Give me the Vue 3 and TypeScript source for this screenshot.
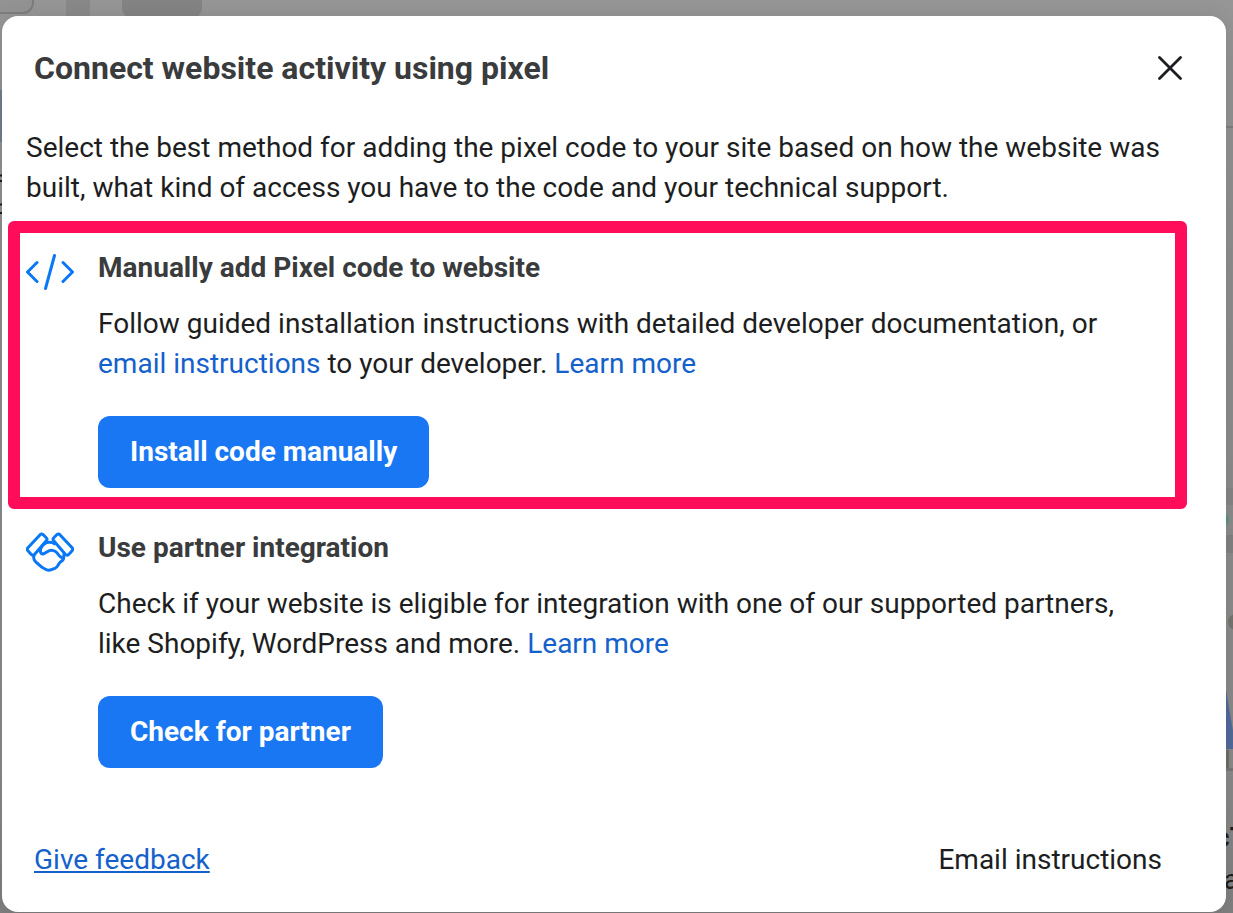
<script setup lang="ts">
interface MethodOption {
  id: string
  title: string
  icon: 'code' | 'handshake'
  action: string
  highlighted: boolean
}

const options: MethodOption[] = [
  { id: 'manual', title: 'Manually add Pixel code to website', icon: 'code', action: 'Install code manually', highlighted: true },
  { id: 'partner', title: 'Use partner integration', icon: 'handshake', action: 'Check for partner', highlighted: false },
]
</script>

<template>
  <div class="page">
    <div class="backdrop" aria-hidden="true">
      <svg class="backdrop-top" width="300" height="220" viewBox="0 0 300 220">
        <rect x="0" y="90" width="4" height="52" fill="#747d8c" />
        <rect x="-20" y="-20" width="53" height="33" rx="10" fill="#939393" stroke="#7d7d7d" stroke-width="2" />
        <rect x="66" y="0" width="24" height="20" fill="#898989" />
        <rect x="122" y="-20" width="80" height="38" rx="10" fill="#848484" />
        <path d="M0 175.500h2M0 181h2M0 204.500h2M0 213h2" stroke="#1c1c1c" stroke-width="2" />
      </svg>
      <svg class="backdrop-side" width="20" height="800" viewBox="0 0 20 800">
        <path d="M0 127h20" stroke="#7f7f7f" stroke-width="2" />
        <rect x="0" y="488" width="20" height="17" fill="#858585" />
        <rect x="0" y="535" width="20" height="18" fill="#828282" />
        <circle cx="8" cy="520" r="8" fill="#5c9484" />
        <circle cx="23" cy="622" r="8" fill="#77756f" />
        <path d="M13 690L20 731V749H13z" fill="#526a9c" />
        <path d="M13 750h3v18h-3z" fill="#716d69" />
        <path d="M13 769.500h7" stroke="#7a7671" stroke-width="3" />
      </svg>
      <span class="clipped clipped-heading">cT</span>
      <span class="clipped clipped-text">a</span>
    </div>

    <main class="dialog" role="dialog" aria-modal="true" aria-labelledby="dialog-title">
      <header class="header">
        <h1 id="dialog-title">Connect website activity using pixel</h1>
        <button class="close" type="button" aria-label="Close">
          <svg width="24" height="24" viewBox="0 0 24 24">
            <path d="M1.500 1.500l21 21M22.500 1.500l-21 21" fill="none" stroke="#1c1e21" stroke-width="2.800" stroke-linecap="round" />
          </svg>
        </button>
      </header>

      <div class="body">
        <p class="intro">
          Select the best method for adding the pixel code to your site based on how the website was
          built, what kind of access you have to the code and your technical support.
        </p>

        <section v-for="option in options" :key="option.id" class="option" :class="{ highlighted: option.highlighted }">
          <svg v-if="option.icon === 'code'" class="icon" width="48" height="48" viewBox="0 0 48 48" aria-hidden="true">
            <path d="M11 14.500L1.500 24L11 33.500M37 14.500L46.500 24L37 33.500M28.500 7.500L19.500 40.500" />
          </svg>
          <svg v-else class="icon" width="48" height="48" viewBox="0 0 48 48" aria-hidden="true">
            <path d="M1.900 19.800L13.900 6.900q1.700-1.700 3.400-.1l2.900 2.900q1.500 1.500.1 3L8.700 26.300q-1.700 1.700-3.400.1l-3.400-3.700q-1.200-1.500 0-2.900z" />
            <path d="M46.100 19.800L34.100 6.900q-1.700-1.700-3.400-.1l-2.900 2.900q-1.500 1.500-.1 3l11.600 13.600q1.700 1.700 3.400.1l3.400-3.700q1.200-1.500 0-2.900z" />
            <path d="M8 27.500c-.9 2.800-.1 4.800 2.100 6.700 2.600 2 4.400 4.300 7.100 5.800 2 .9 3 2.200 5.200 2.200 2.600 0 3.900-1.200 6.200-1.700 3-.8 3.100-3.100 4.600-5.200 1-1.700 3.600-2.100 4.200-4.300.3-1.600.8-3 .5-4.700" />
            <path d="M18.200 16c2.800-2.300 7.800-2.300 10.400-.1M18.200 16c-2.500 2-4.800 6.200-3.500 8.700 1.500 2.500 4.300.5 6.200-.8 4-2.700 8-1.700 10.200 1 1.400 1.900 2.300 3.900 4.900 4.800" />
          </svg>
          <div class="content">
            <h2>{{ option.title }}</h2>
            <p v-if="option.id === 'manual'">
              Follow guided installation instructions with detailed developer documentation, or
              <a href="#email">email instructions</a> to your developer. <a href="#manual-help">Learn more</a>
            </p>
            <p v-else>
              Check if your website is eligible for integration with one of our supported partners,
              like Shopify, WordPress and more. <a href="#partner-help">Learn more</a>
            </p>
            <button class="primary" type="button">{{ option.action }}</button>
          </div>
        </section>
      </div>

      <footer class="footer">
        <a class="feedback" href="#feedback">Give feedback</a>
        <button class="email" type="button">Email instructions</button>
      </footer>
    </main>
  </div>
</template>

<style>
body {
  margin: 0;
  background: #808080;
}
</style>

<style scoped>
.page {
  position: relative;
  overflow: hidden;
  padding: 16px 7px 1px 2px;
  font-family: Roboto, "Liberation Sans", sans-serif;
  font-size: 28px;
  line-height: 40px;
  color: #1c1e21;
}
.backdrop {
  position: absolute;
  inset: 0;
  background: linear-gradient(#969696, #8e8e8e 30%, #8a8a8a 85%, #808080);
}
.backdrop svg {
  position: absolute;
  top: 0;
}
.backdrop-top {
  left: 0;
}
.backdrop-side {
  right: 0;
}
.clipped {
  position: absolute;
  color: #1c1c1c;
}
.clipped-heading {
  top: 818px;
  right: -14px;
  font-weight: 700;
}
.clipped-text {
  top: 860px;
  right: -6px;
}
.dialog {
  position: relative;
  background: #fff;
  border-radius: 16px;
  box-shadow: 0 4px 24px rgba(0, 0, 0, 0.12);
}
.header {
  display: flex;
  align-items: center;
  justify-content: space-between;
  height: 104px;
  padding: 0 32px;
}
h1,
h2,
p {
  margin: 0;
}
h1 {
  font-size: 32px;
  line-height: 40px;
  font-weight: 700;
  color: #3a3b3d;
}
button {
  font: inherit;
  border: 0;
  cursor: pointer;
}
.close {
  display: flex;
  align-items: center;
  justify-content: center;
  width: 48px;
  height: 48px;
  padding: 0;
  background: transparent;
}
.body {
  display: flex;
  flex-direction: column;
  gap: 40px;
  padding: 8px 24px 40px;
}
.option {
  position: relative;
  display: flex;
  gap: 24px;
}
.highlighted::after {
  content: "";
  position: absolute;
  inset: -27px 15px -21px -18px;
  border: 12px solid #ff0d5b;
  border-radius: 6px;
  pointer-events: none;
}
.icon {
  flex: none;
  fill: none;
  stroke: #0a78f5;
  stroke-width: 3;
  stroke-linecap: round;
  stroke-linejoin: round;
}
.content {
  flex: 1;
  padding-right: 48px;
}
h2 {
  font-size: 28px;
  line-height: 40px;
  font-weight: 700;
  color: #3a3b3d;
  margin-bottom: 16px;
}
a {
  color: #1461cc;
  text-decoration: none;
}
.primary {
  display: block;
  height: 72px;
  margin-top: 32px;
  padding: 0 32px;
  border-radius: 12px;
  background: #1977f3;
  color: #fff;
  font-weight: 700;
}
.footer {
  display: flex;
  align-items: center;
  justify-content: space-between;
  height: 104px;
  padding: 0 32px;
}
.feedback {
  text-decoration: underline;
}
.email {
  padding: 0 32px;
  background: transparent;
  color: #1c1e21;
}
</style>
